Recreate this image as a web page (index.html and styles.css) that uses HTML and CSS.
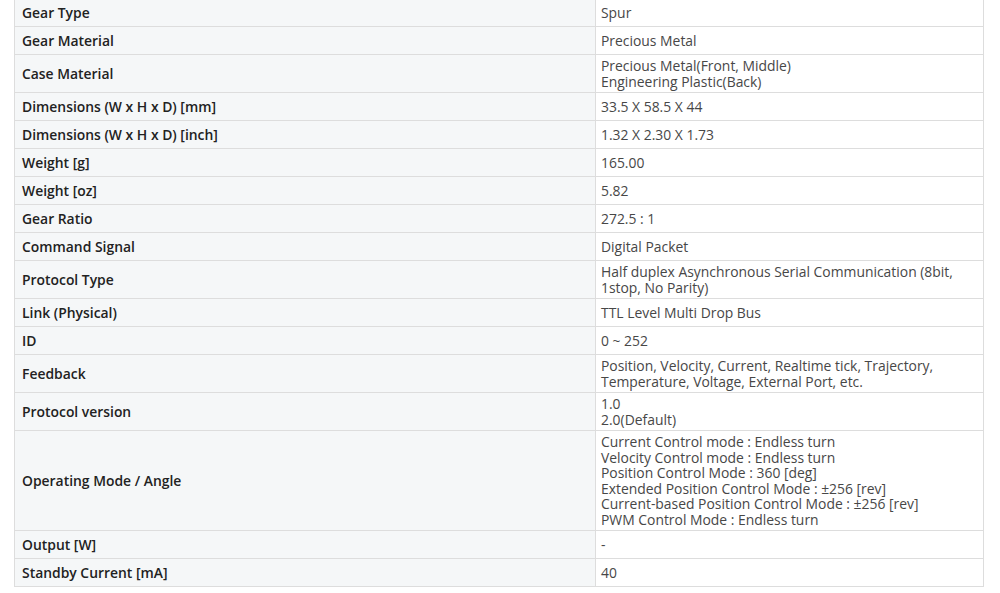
FILE: index.html
```html
<!DOCTYPE html>
<html lang="en">
<head>
<meta charset="utf-8">
<title>Specifications</title>
<link rel="stylesheet" href="styles.css">
</head>
<body>
<div class="wrap">
<table class="spec">
  <tbody>
    <tr><th>Gear Type</th><td>Spur</td></tr>
    <tr><th>Gear Material</th><td>Precious Metal</td></tr>
    <tr><th>Case Material</th><td>Precious Metal(Front, Middle)<br>Engineering Plastic(Back)</td></tr>
    <tr><th>Dimensions (W x H x D) [mm]</th><td>33.5 X 58.5 X 44</td></tr>
    <tr><th>Dimensions (W x H x D) [inch]</th><td>1.32 X 2.30 X 1.73</td></tr>
    <tr><th>Weight [g]</th><td>165.00</td></tr>
    <tr><th>Weight [oz]</th><td>5.82</td></tr>
    <tr><th>Gear Ratio</th><td>272.5 : 1</td></tr>
    <tr><th>Command Signal</th><td>Digital Packet</td></tr>
    <tr><th>Protocol Type</th><td>Half duplex Asynchronous Serial Communication (8bit,<br>1stop, No Parity)</td></tr>
    <tr><th>Link (Physical)</th><td>TTL Level Multi Drop Bus</td></tr>
    <tr><th>ID</th><td>0 ~ 252</td></tr>
    <tr><th>Feedback</th><td>Position, Velocity, Current, Realtime tick, Trajectory,<br>Temperature, Voltage, External Port, etc.</td></tr>
    <tr><th>Protocol version</th><td>1.0<br>2.0(Default)</td></tr>
    <tr><th>Operating Mode / Angle</th><td>Current Control mode : Endless turn<br>Velocity Control mode : Endless turn<br>Position Control Mode : 360 [deg]<br>Extended Position Control Mode : ±256 [rev]<br>Current-based Position Control Mode : ±256 [rev]<br>PWM Control Mode : Endless turn</td></tr>
    <tr><th>Output [W]</th><td>-</td></tr>
    <tr><th>Standby Current [mA]</th><td>40</td></tr>
  </tbody>
</table>
</div>
</body>
</html>
```

FILE: styles.css
```css
html, body {
  margin: 0;
  padding: 0;
  background: #ffffff;
}
.wrap {
  padding: 0 16px 0 14px;
  margin-top: -2px;
}
.spec {
  width: 970px;
  border-collapse: collapse;
  font-family: "Open Sans", "Noto Sans", sans-serif;
  font-size: 13.9px;
  line-height: 15.5px;
  color: #333333;
}
.spec th, .spec td {
  border: 1px solid #dddddd;
  height: 21px;
  padding: 3px 6px;
  vertical-align: middle;
  text-align: left;
}
.spec th {
  width: 567px;
  background: #f5f7f8;
  font-weight: 600;
  color: #222222;
  padding-left: 7px;
}
.spec td {
  font-weight: 400;
  color: #474747;
  padding-left: 5px;
}
```
